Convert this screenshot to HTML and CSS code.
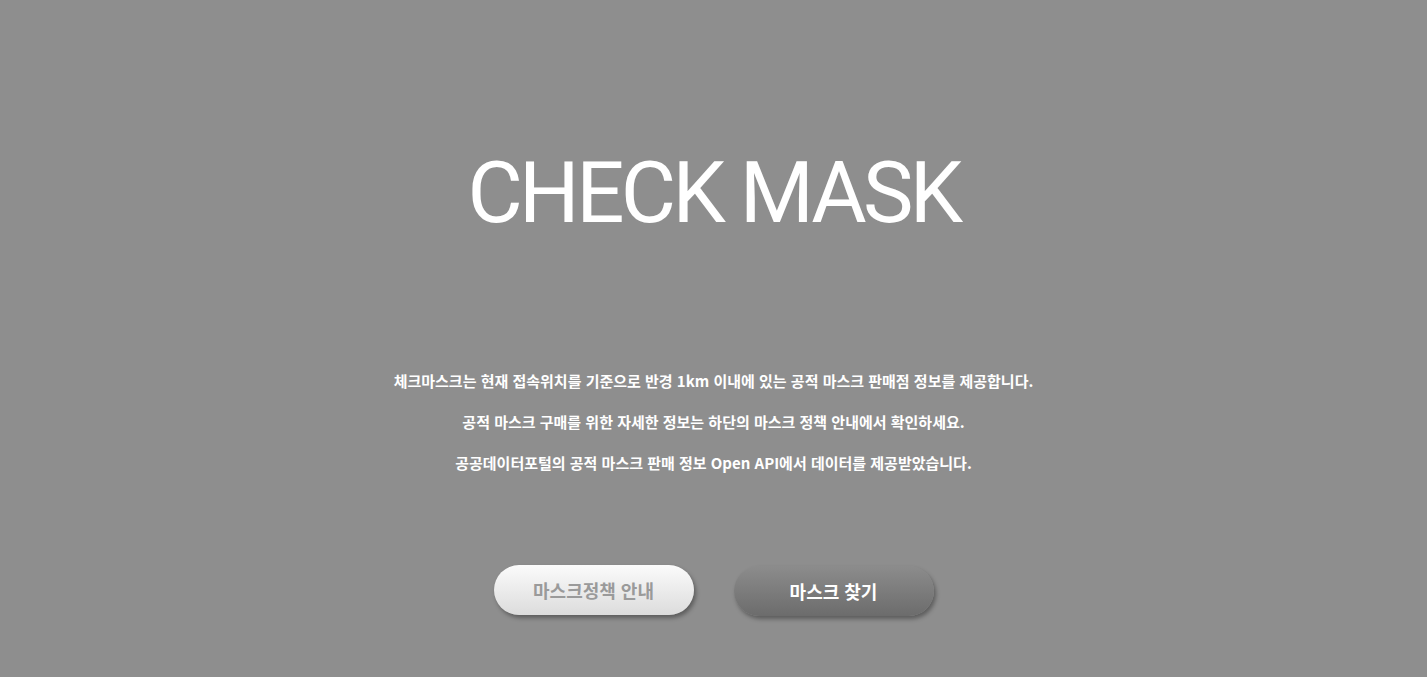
FILE: index.html
```html
<!DOCTYPE html>
<html lang="ko">
<head>
<meta charset="utf-8">
<link rel="stylesheet" href="styles.css">
</head>
<body>
<main class="page">
  <h1 class="title">CHECK MASK</h1>
  <div class="desc">
    <p>체크마스크는 현재 접속위치를 기준으로 반경 1km 이내에 있는 공적 마스크 판매점 정보를 제공합니다.</p>
    <p>공적 마스크 구매를 위한 자세한 정보는 하단의 마스크 정책 안내에서 확인하세요.</p>
    <p>공공데이터포털의 공적 마스크 판매 정보 Open API에서 데이터를 제공받았습니다.</p>
  </div>
  <div class="actions">
    <button class="btn btn-light">마스크정책 안내</button>
    <button class="btn btn-dark">마스크 찾기</button>
  </div>
</main>
</body>
</html>
```

FILE: styles.css
```css
html, body {
  margin: 0;
  padding: 0;
  background: #8e8e8e;
  height: 100%;
}
.page {
  display: flex;
  flex-direction: column;
  align-items: center;
  font-family: "Noto Sans CJK KR", "Noto Sans", sans-serif;
}
.title {
  margin: 143px 0 0;
  font-family: Roboto, "Liberation Sans", sans-serif;
  font-weight: 400;
  font-size: 85px;
  line-height: 100px;
  color: #ffffff;
  letter-spacing: -3.6px;
}
.desc {
  margin-top: 127px;
  text-align: center;
  color: #ffffff;
  font-size: 15px;
  font-weight: 700;
}
.desc p {
  margin: 0 0 19px;
  line-height: 22px;
}
.actions {
  margin-top: 72px;
  display: flex;
  gap: 40px;
}
.btn {
  width: 200px;
  height: 50px;
  border: none;
  border-radius: 25px;
  font-family: "Noto Sans CJK KR", sans-serif;
  font-size: 18px;
  font-weight: 700;
  box-shadow: 2px 3px 4px rgba(0, 0, 0, 0.35);
}
.btn-light {
  background: linear-gradient(#fbfbfb, #dcdcdc);
  color: #9a9a9a;
}
.btn-dark {
  margin-top: 1px;
  background: linear-gradient(#8c8c8c, #6c6c6c);
  color: #ffffff;
}
```
